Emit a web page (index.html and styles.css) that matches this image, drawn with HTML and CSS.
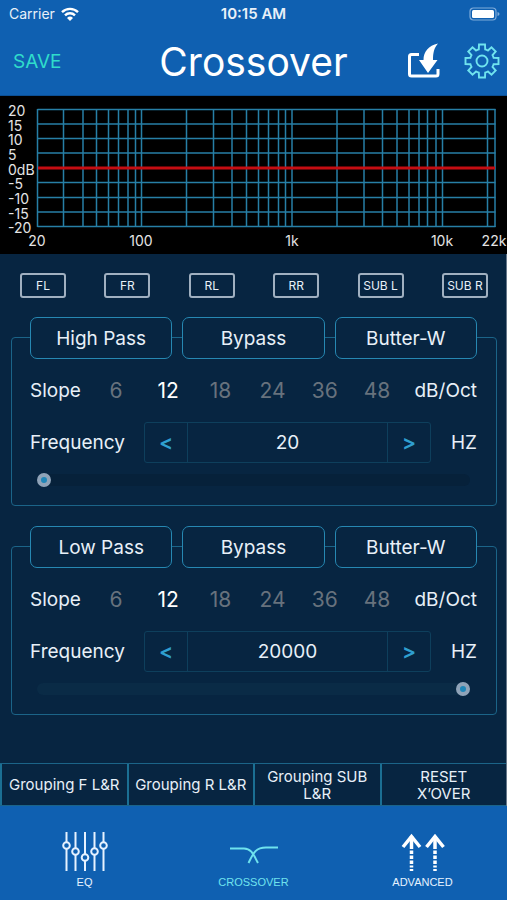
FILE: index.html
```html
<!DOCTYPE html>
<html lang="en">

<head>
    <meta charset="UTF-8">
    <meta name="viewport" content="width=device-width, initial-scale=1.0">
    <title>Crossover</title>
    <link rel="stylesheet" href="styles.css">
</head>

<body>
    <header class="header">
        <div class="status-bar">
            <div class="carrier">
                <span>Carrier</span>
                <svg width="18" height="14" viewBox="0 0 18 14" fill="none" stroke="#fff" stroke-width="2.4">
                    <path d="M1 5.2a11.4 11.4 0 0 1 16 0" />
                    <path d="M4 8.3a7.1 7.1 0 0 1 10 0" />
                    <path d="M9 14L6 10.900a4.300 4.300 0 0 1 6 0z" fill="#fff" stroke="none" />
                </svg>
            </div>
            <div class="time">10:15 AM</div>
            <div class="battery">
                <svg width="31" height="14" viewBox="0 0 31 14">
                    <rect x="1" y="1" width="26" height="12" rx="3.500" fill="none" stroke="#7fabda" stroke-width="1.200" />
                    <rect x="3" y="3" width="22" height="8" rx="1.500" fill="#fff" />
                    <path d="M28.500 5v4q2-.6 2-2t-2-2z" fill="#7fabda" />
                </svg>
            </div>
        </div>
        <div class="title-bar">
            <button class="save-button">SAVE</button>
            <h1>Crossover</h1>
            <div class="title-actions">
                <button class="icon-button" aria-label="Import">
                    <svg width="34" height="36" viewBox="0 0 34 36">
                        <path d="M13 11.500H5.500Q3.500 11.500 3.500 13.500V31Q3.500 33 5.500 33H30Q32 33 32 31V26" fill="none" stroke="#fff" stroke-width="3" />
                        <path d="M13 17H17.500C17.500 9 22.500 2.500 32 .5C28 5 27 10 27 17H31.500L22 30z" fill="#fff" />
                    </svg>
                </button>
                <button class="icon-button" aria-label="Settings">
                    <svg width="36" height="36" viewBox="-18 -18 36 36" fill="none" stroke="#6fe3ee" stroke-width="1.900">
                        <path d="M-3.200-11.600L-3-16.500H3L3.200-11.600A12 12 0 0 1 5.900-10.500L9.500-13.700L13.700-9.500L10.500-5.900A12 12 0 0 1 11.600-3.200L16.500-3V3L11.600 3.200A12 12 0 0 1 10.500 5.900L13.700 9.500L9.500 13.700L5.900 10.500A12 12 0 0 1 3.200 11.600L3 16.500H-3L-3.200 11.600A12 12 0 0 1-5.900 10.500L-9.500 13.700L-13.700 9.500L-10.500 5.900A12 12 0 0 1-11.600 3.200L-16.500 3V-3L-11.600-3.200A12 12 0 0 1-10.500-5.900L-13.700-9.500L-9.500-13.700L-5.900-10.500A12 12 0 0 1-3.200-11.600z" />
                        <circle r="5.500" />
                    </svg>
                </button>
            </div>
        </div>
    </header>

    <!-- Frequency response -->
    <svg class="chart" viewBox="0 0 507 158">
        <path class="grid" d="M37.500 13.500H495.500M37.500 28H495.500M37.500 42.500H495.500M37.500 57H495.500M37.500 86.500H495.500M37.500 101.500H495.500M37.500 116H495.500M37.500 130.500H495.500" />
        <path class="grid" d="M37.500 13V131M63.500 13V131M83 13V131M96.500 13V131M108.500 13V131M118.500 13V131M128 13V131M135.500 13V131M141.500 13V131" />
        <path class="grid" d="M186.500 13V131M213.500 13V131M232 13V131M246.500 13V131M258.500 13V131M268.500 13V131M278.500 13V131M285.500 13V131M292 13V131" />
        <path class="grid" d="M337 13V131M364 13V131M382.500 13V131M397 13V131M409 13V131M419 13V131M427.500 13V131M436 13V131M442.500 13V131M487.500 13V131M495 13V131" />
        <path class="curve" d="M38 72H495" />
        <g class="axis">
            <text x="8" y="20">20</text>
            <text x="8" y="35">15</text>
            <text x="8" y="49">10</text>
            <text x="8" y="64">5</text>
            <text x="8" y="79">0dB</text>
            <text x="8" y="93">-5</text>
            <text x="8" y="108">-10</text>
            <text x="8" y="123">-15</text>
            <text x="8" y="137">-20</text>
        </g>
        <g class="axis axis-x">
            <text x="37" y="150">20</text>
            <text x="141" y="150">100</text>
            <text x="292" y="150">1k</text>
            <text x="442" y="150">10k</text>
            <text x="494" y="150">22k</text>
        </g>
    </svg>

    <main class="main">
        <div class="channels">
            <button class="channel">FL</button>
            <button class="channel">FR</button>
            <button class="channel">RL</button>
            <button class="channel">RR</button>
            <button class="channel">SUB L</button>
            <button class="channel">SUB R</button>
        </div>

        <section class="filter high-pass">
            <div class="filter-buttons">
                <button class="filter-button">High Pass</button>
                <button class="filter-button">Bypass</button>
                <button class="filter-button">Butter-W</button>
            </div>
            <div class="slope" role="radiogroup" aria-labelledby="hp-slope">
                <span id="hp-slope">Slope</span>
                <label class="slope-option"><input type="radio" name="hp-slope">6</label>
                <label class="slope-option"><input type="radio" name="hp-slope" checked>12</label>
                <label class="slope-option"><input type="radio" name="hp-slope">18</label>
                <label class="slope-option"><input type="radio" name="hp-slope">24</label>
                <label class="slope-option"><input type="radio" name="hp-slope">36</label>
                <label class="slope-option"><input type="radio" name="hp-slope">48</label>
                <span class="unit">dB/Oct</span>
            </div>
            <div class="frequency">
                <label for="hp-freq">Frequency</label>
                <div class="stepper">
                    <button class="step" aria-label="Decrease">&lt;</button>
                    <input class="value" id="hp-freq" type="text" value="20">
                    <button class="step" aria-label="Increase">&gt;</button>
                </div>
                <span class="unit">HZ</span>
            </div>
            <input class="slider" type="range" min="20" max="20000" value="20" aria-label="High pass frequency">
        </section>

        <section class="filter low-pass">
            <div class="filter-buttons">
                <button class="filter-button">Low Pass</button>
                <button class="filter-button">Bypass</button>
                <button class="filter-button">Butter-W</button>
            </div>
            <div class="slope" role="radiogroup" aria-labelledby="lp-slope">
                <span id="lp-slope">Slope</span>
                <label class="slope-option"><input type="radio" name="lp-slope">6</label>
                <label class="slope-option"><input type="radio" name="lp-slope" checked>12</label>
                <label class="slope-option"><input type="radio" name="lp-slope">18</label>
                <label class="slope-option"><input type="radio" name="lp-slope">24</label>
                <label class="slope-option"><input type="radio" name="lp-slope">36</label>
                <label class="slope-option"><input type="radio" name="lp-slope">48</label>
                <span class="unit">dB/Oct</span>
            </div>
            <div class="frequency">
                <label for="lp-freq">Frequency</label>
                <div class="stepper">
                    <button class="step" aria-label="Decrease">&lt;</button>
                    <input class="value" id="lp-freq" type="text" value="20000">
                    <button class="step" aria-label="Increase">&gt;</button>
                </div>
                <span class="unit">HZ</span>
            </div>
            <input class="slider" type="range" min="20" max="20000" value="20000" aria-label="Low pass frequency">
        </section>

        <div class="grouping">
            <button class="group-button">Grouping F L&amp;R</button>
            <button class="group-button">Grouping R L&amp;R</button>
            <button class="group-button">Grouping SUB<br>L&amp;R</button>
            <button class="group-button">RESET<br>X’OVER</button>
        </div>
    </main>

    <nav class="tabs">
        <a class="tab" href="#eq">
            <svg width="48" height="40" viewBox="0 0 48 40" fill="none" stroke="#e6f2ff" stroke-width="2">
                <path d="M5.500 0V10M5.500 17V39M14.500 0V16M14.500 23V39M24 0V22M24 29V39M33.500 0V16M33.500 23V39M42.500 0V10M42.500 17V39" />
                <circle cx="5.500" cy="13.500" r="3.300" />
                <circle cx="14.500" cy="19.500" r="3.300" />
                <circle cx="24" cy="25.500" r="3.300" />
                <circle cx="33.500" cy="19.500" r="3.300" />
                <circle cx="42.500" cy="13.500" r="3.300" />
            </svg>
            <span>EQ</span>
        </a>
        <a class="tab active" href="#crossover">
            <svg width="48" height="40" viewBox="0 0 48 40" fill="none" stroke="#6fe3ee" stroke-width="2">
                <path d="M0 16.500H14C22 16.500 24 24 28 31" />
                <path d="M48 15.500H36C25 15.500 23 22 18.500 31" />
            </svg>
            <span>CROSSOVER</span>
        </a>
        <a class="tab" href="#advanced">
            <svg width="48" height="40" viewBox="0 0 48 40" fill="none" stroke="#fff" stroke-width="3.500">
                <path d="M4 15L12.500 4.500L21 15M27.500 15L36 4.500L44.500 15" />
                <path d="M12.500 4V17M12.500 18.500V22M12.500 23.500V27M12.500 28.500V32M12.500 33.500V35.500M12.500 37V39M36 4V17M36 18.500V22M36 23.500V27M36 28.500V32M36 33.500V35.500M36 37V39" />
            </svg>
            <span>ADVANCED</span>
        </a>
    </nav>
</body>

</html>
```

FILE: styles.css
```css
* {
    box-sizing: border-box;
}

body {
    font-family: Inter, "Liberation Sans", sans-serif;
    margin: 0;
    min-height: 100vh;
    display: flex;
    flex-direction: column;
    background-color: #0f60b1;
    color: #e8f0f8;
}

button,
input {
    font-family: inherit;
    color: inherit;
    margin: 0;
}

button {
    padding: 0;
    border: none;
    background: none;
    cursor: pointer;
}

svg {
    display: block;
}

.header {
    background-color: #0f60b1;
    border-bottom: 1px solid #0b4f94;
}

.status-bar {
    display: grid;
    grid-template-columns: 1fr auto 1fr;
    align-items: center;
    height: 27px;
    padding: 0 7px;
    font-size: 14px;
}

.carrier {
    display: flex;
    align-items: center;
    gap: 6px;
    padding-left: 2px;
}

.time {
    font-size: 15px;
    font-weight: 600;
}

.battery {
    justify-self: end;
}

.title-bar {
    display: grid;
    grid-template-columns: 1fr auto 1fr;
    align-items: center;
    height: 68px;
    padding: 0 7px;
}

.title-bar h1 {
    margin: 0;
    font-size: 39px;
    font-weight: 400;
    color: #fff;
}

.save-button {
    justify-self: start;
    padding-left: 6px;
    font-size: 19px;
    color: #2fdccb;
}

.title-actions {
    display: flex;
    justify-content: flex-end;
    align-items: center;
    gap: 24px;
}

.chart {
    width: 100%;
    background-color: #000;
}

.grid {
    fill: none;
    stroke: #277fa6;
    stroke-width: 1.5;
}

.curve {
    stroke: #c40d12;
    stroke-width: 3;
}

.axis {
    font-size: 14px;
    fill: #e4e4e4;
}

.axis-x {
    text-anchor: middle;
}

.main {
    flex: 1;
    display: flex;
    flex-direction: column;
    background-color: #072541;
    border-right: 1px solid #66788a;
}

.channels {
    display: flex;
    justify-content: space-between;
    padding: 19px 18px 0 20px;
}

.channel {
    width: 46px;
    height: 25px;
    border: 2px solid #a0b0c0;
    border-radius: 3px;
    font-size: 12px;
    white-space: nowrap;
}

.filter {
    margin: 39px 9px 0 11px;
    padding: 0 19px 19px 18px;
    border: 1px solid #1b6488;
    border-radius: 4px;
}

.low-pass {
    margin-top: 40px;
}

.filter-buttons {
    display: grid;
    grid-template-columns: repeat(3, 1fr);
    gap: 10px;
    margin-top: -21px;
}

.filter-button {
    height: 42px;
    background-color: #072541;
    border: 1px solid #2688b2;
    border-radius: 7px;
    font-size: 19px;
}

.slope {
    display: grid;
    grid-template-columns: 60px repeat(6, 1fr) 74px;
    align-items: center;
    height: 63px;
    font-size: 19px;
}

.slope-option {
    text-align: center;
    font-size: 21px;
    color: #67727d;
    cursor: pointer;
}

.slope-option input {
    position: absolute;
    opacity: 0;
}

.slope-option:has(input:checked) {
    color: #fff;
}

.unit {
    text-align: right;
}

.frequency {
    display: grid;
    grid-template-columns: 114px 1fr 46px;
    align-items: center;
    font-size: 19px;
}

.stepper {
    display: grid;
    grid-template-columns: 42px 1fr 42px;
    height: 41px;
    border: 1px solid #0e3f5c;
    border-radius: 3px;
}

.step {
    font-size: 21px;
    font-weight: 600;
    color: #2f9fd0;
}

.value {
    min-width: 0;
    padding: 0;
    border: solid #0e3f5c;
    border-width: 0 1px;
    background: none;
    font-size: 19px;
    text-align: center;
}

.slider {
    display: block;
    appearance: none;
    width: calc(100% - 14px);
    height: 12px;
    margin: 11px 7px 0;
    border-radius: 6px;
    background-color: #06213a;
}

.low-pass .slider {
    background-color: #0a2b46;
}

.slider::-webkit-slider-thumb {
    appearance: none;
    width: 14px;
    height: 14px;
    border: 4px solid #8fa3b8;
    border-radius: 7px;
    background-color: #1f86b8;
}

.grouping {
    display: grid;
    grid-template-columns: repeat(4, 1fr);
    margin-top: auto;
    border: solid #1b6488;
    border-width: 1px 0;
}

.group-button {
    height: 41px;
    border-left: 2px solid #1b6f93;
    font-size: 15px;
    line-height: 17px;
}

.tabs {
    display: grid;
    grid-template-columns: repeat(3, 1fr);
    height: 94px;
    padding-top: 26px;
    background-color: #0f60b1;
}

.tab {
    display: flex;
    flex-direction: column;
    align-items: center;
    gap: 4px;
    font-family: "Liberation Sans", Arial, sans-serif;
    font-size: 11px;
    color: #e6f2ff;
    text-decoration: none;
}

.active {
    color: #6fe3ee;
}
```
